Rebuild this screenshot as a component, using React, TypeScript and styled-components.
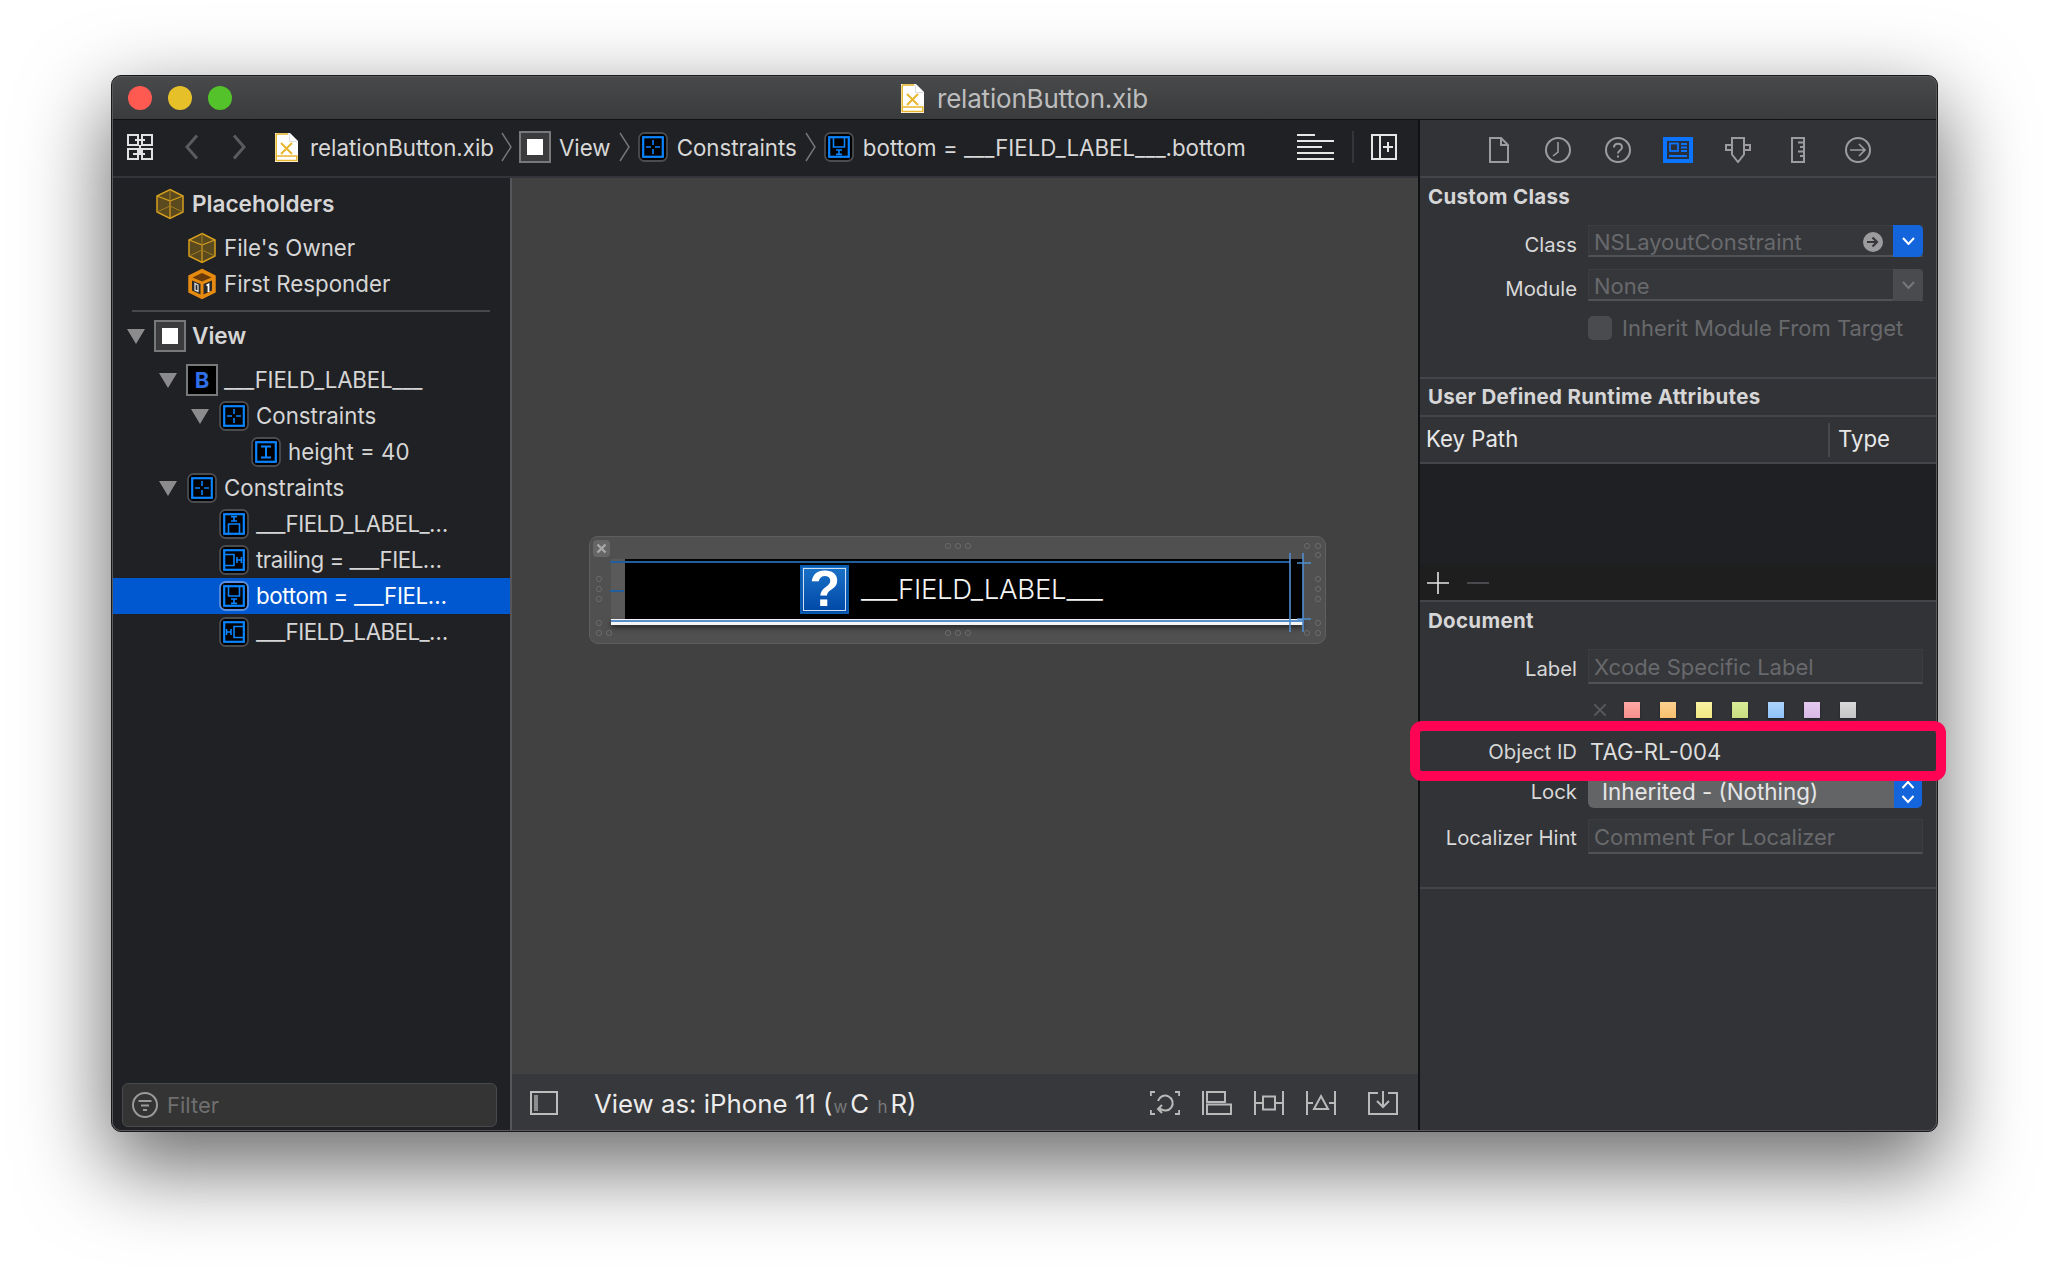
import React from 'react'
import styled, { createGlobalStyle } from 'styled-components'

const FONT = `Inter, "Liberation Sans", sans-serif`

const Global = createGlobalStyle`
  html, body { margin: 0; padding: 0; background: #fff; }
  body { font-family: ${FONT}; -webkit-font-smoothing: antialiased; }
  * { box-sizing: border-box; }
  svg { display: block; flex: none; }
`

const Page = styled.div`
  width: 2050px;
  height: 1280px;
  padding: 75px 0 0 111px;
  overflow: hidden;
  background: #fff;
`

const Window = styled.div`
  width: 1827px;
  height: 1057px;
  border: 1px solid #17181a;
  padding: 1px;
  border-radius: 10px;
  background: #5a5a5c;
  box-shadow: 0 32px 84px 4px rgba(0, 0, 0, 0.58);
  display: flex;
  flex-direction: column;
`

const TitleBar = styled.div`
  height: 43px;
  flex: none;
  display: flex;
  align-items: center;
  padding-left: 15px;
  border-bottom: 1px solid #111214;
  border-radius: 8px 8px 0 0;
  background: linear-gradient(#48494b, #3a3b3d);
`

const Light = styled.span<{ $color: string }>`
  width: 24px;
  height: 24px;
  border-radius: 50%;
  margin-right: 16px;
  background: ${p => p.$color};
`

const Title = styled.div`
  display: flex;
  align-items: center;
  gap: 13px;
  margin-left: 653px;
  color: #bdbdbe;
  font-size: 26px;
  letter-spacing: -0.2px;
`

const Body = styled.div`
  flex: 1;
  display: flex;
  min-height: 0;
`

const Main = styled.div`
  width: 1305px;
  flex: none;
  display: flex;
  flex-direction: column;
`

const Toolbar = styled.div`
  height: 58px;
  flex: none;
  display: flex;
  align-items: center;
  padding: 0 0 2px 14px;
  background: #202125;
  border-bottom: 2px solid #34353a;
  color: #d8d8d8;
  font-size: 22.3px;
`

const ToolIcon = styled.span<{ $ml: number }>`
  margin-left: ${p => p.$ml}px;
  flex: none;
`

const ToolRule = styled.span`
  width: 2px;
  height: 32px;
  margin: 0 17px 0 18px;
  background: #34353a;
`

const Crumb = styled.div<{ $ml?: number; $gap?: number }>`
  display: flex;
  align-items: center;
  gap: ${p => p.$gap ?? 8}px;
  margin-left: ${p => p.$ml ?? 0}px;
  white-space: nowrap;
`

const Workspace = styled.div`
  flex: 1;
  display: flex;
  min-height: 0;
`

const Navigator = styled.div`
  width: 399px;
  flex: none;
  display: flex;
  flex-direction: column;
  background: #202125;
  border-right: 2px solid #55565a;
  border-bottom-left-radius: 8px;
`

const Tree = styled.div`
  flex: 1;
  padding-top: 4px;
`

const Row = styled.div<{ $depth: number; $h?: number; $mt?: number; $selected?: boolean; $bold?: boolean }>`
  height: ${p => p.$h ?? 36}px;
  margin-top: ${p => p.$mt ?? 0}px;
  display: flex;
  align-items: center;
  padding-left: ${p => 14 + p.$depth * 32}px;
  font-size: ${p => (p.$bold ? 22.6 : 22.3)}px;
  font-weight: ${p => (p.$bold ? 600 : 400)};
  color: ${p => (p.$selected ? '#fff' : '#d6d6d6')};
  background: ${p => (p.$selected ? '#0058d0' : 'transparent')};
  white-space: nowrap;
`

const RowLabel = styled.span<{ $tight?: number }>`
  margin-top: -2px;
  letter-spacing: ${p => p.$tight ?? 0}px;
`

const Disclosure = styled.span<{ $open?: boolean }>`
  width: 27px;
  flex: none;
  &::before {
    content: '';
    display: ${p => (p.$open ? 'block' : 'none')};
    width: 0;
    height: 0;
    border-left: 9px solid transparent;
    border-right: 9px solid transparent;
    border-top: 15px solid #8b8b8d;
  }
`

const RowIcon = styled.span`
  width: 32px;
  height: 32px;
  flex: none;
  margin-right: 6px;
  display: block;
`

const TreeRule = styled.div`
  height: 2px;
  margin: 12px 20px 6px 19px;
  background: #47484b;
`

const Filter = styled.div`
  height: 44px;
  margin: 0 13px 3px 9px;
  display: flex;
  align-items: center;
  gap: 9px;
  padding-left: 9px;
  border-radius: 6px;
  border: 1px solid #48494b;
  background: #343434;
  color: #6f6f70;
  font-size: 22px;
`

const CanvasColumn = styled.div`
  flex: 1;
  display: flex;
  flex-direction: column;
  min-width: 0;
`

const CanvasArea = styled.div`
  flex: 1;
  padding: 358px 0 0 77px;
  background: #414141;
`

const Widget = styled.div`
  position: relative;
  width: 737px;
  height: 108px;
  padding: 22px 22px 0 21px;
  border-radius: 9px;
  border: 1px solid #5f5f5f;
  background: #505050;
`

const WidgetBody = styled.div`
  height: 60px;
  padding-left: 14px;
  background: #5a5a5a;
`

const WidgetBlack = styled.div`
  height: 100%;
  display: flex;
  align-items: center;
  padding-left: 175px;
  background: #000;
  color: #f4f4f4;
  font-size: 27.6px;
  font-weight: 300;
  letter-spacing: -0.3px;
`

const QuestionBadge = styled.div`
  width: 49px;
  height: 49px;
  margin-right: 12px;
  display: flex;
  align-items: center;
  justify-content: center;
  background: linear-gradient(#1a72c8, #0048a6);
  border: 2px solid #0a5bb0;
  outline: 1.5px solid #cfe0f2;
  outline-offset: -4px;
  color: #fff;
  font-family: "Liberation Sans", sans-serif;
  font-weight: 700;
  font-size: 50px;
`

const WidgetBase = styled.div`
  height: 6px;
  border-top: 1px solid #f4f4f4;
  border-bottom: 3px solid #f4f4f4;
  background: #5b8fcb;
  box-shadow: 0 3px 5px rgba(0, 0, 0, 0.5);
`

const WidgetMarks = styled.svg`
  position: absolute;
  left: -1px;
  top: -1px;
`

const BottomBar = styled.div`
  height: 56px;
  flex: none;
  display: flex;
  align-items: center;
  padding: 2px 20px 0 18px;
  background: #37383b;
  color: #ececec;
`

const ViewAs = styled.div`
  margin-left: 36px;
  font-size: 25.8px;
  flex: 1;
  white-space: nowrap;
`

const SizeClass = styled.span`
  font-size: 17px;
  color: #77787a;
  margin: 0 3px 0 1px;
`

const BottomIcons = styled.div`
  display: flex;
  align-items: center;
  gap: 22px;
`

const EmbedSlot = styled.span`
  margin-left: 10px;
`

const Inspector = styled.div`
  flex: 1;
  display: flex;
  flex-direction: column;
  border-left: 2px solid #101113;
  background: #323337;
  border-bottom-right-radius: 8px;
`

const InspectorTabs = styled.div`
  height: 58px;
  flex: none;
  padding: 4px 0 0 69px;
  display: flex;
  align-items: center;
  border-bottom: 2px solid #44454a;
`

const Tab = styled.span<{ $w: number; $ml: number }>`
  width: ${p => p.$w}px;
  margin-left: ${p => p.$ml}px;
  flex: none;
`

const Section = styled.div<{ $h: number }>`
  height: ${p => p.$h}px;
  flex: none;
  border-bottom: 2px solid #44454a;
`

const Heading = styled.div<{ $top: number }>`
  padding: ${p => p.$top}px 0 0 8px;
  height: ${p => p.$top + 24}px;
  line-height: 24px;
  font-size: 20.5px;
  font-weight: 700;
  letter-spacing: 0.3px;
  color: #d6d6d7;
`

const FormRow = styled.div<{ $top?: number }>`
  display: grid;
  grid-template-columns: 157px 335px;
  column-gap: 11px;
  margin-top: ${p => p.$top ?? 0}px;
  position: relative;
`

const FieldLabel = styled.div<{ $drop?: number }>`
  text-align: right;
  font-size: 20.3px;
  line-height: 24px;
  color: #d8d8d8;
  align-self: center;
  transform: translateY(${p => p.$drop ?? 0}px);
  white-space: nowrap;
`

const Field = styled.div<{ $h?: number }>`
  height: ${p => p.$h ?? 33}px;
  display: flex;
  align-items: center;
  padding: 2px 0 0 5px;
  border: 1px solid #3c3d41;
  border-bottom: 2px solid #515256;
  background: #36373b;
  color: #68696c;
  font-size: 22px;
  white-space: nowrap;
`

const ComboEnd = styled.span<{ $active?: boolean; $inset?: boolean; $flush?: boolean }>`
  margin-left: ${p => (p.$flush ? '0' : 'auto')};
  width: ${p => (p.$inset ? 28 : 30)}px;
  align-self: stretch;
  margin-top: ${p => (p.$inset ? 0 : -3)}px;
  margin-bottom: ${p => (p.$inset ? 0 : -2)}px;
  margin-right: ${p => (p.$inset ? 0 : -1)}px;
  display: flex;
  align-items: center;
  justify-content: center;
  border-radius: 0 5px 5px 0;
  background: ${p => (p.$active ? '#1465dc' : '#4a4b4e')};
`

const Checkline = styled.div`
  display: flex;
  align-items: center;
  gap: 10px;
  margin: 14px 0 0 168px;
  color: #68696c;
  font-size: 22px;
`

const CheckBox = styled.span`
  width: 24px;
  height: 24px;
  border-radius: 5px;
  background: #4a4b4e;
`

const TableHead = styled.div`
  height: 47px;
  flex: none;
  display: grid;
  grid-template-columns: 408px 1fr;
  align-items: center;
  border-bottom: 2px solid #44454a;
  font-size: 22.2px;
  color: #e8e8e8;
`

const ColHead = styled.div<{ $rule?: boolean }>`
  height: 34px;
  line-height: 32px;
  padding-left: ${p => (p.$rule ? 8 : 6)}px;
  border-left: ${p => (p.$rule ? '2px solid #47484c' : 'none')};
`

const TableBody = styled.div`
  height: 101px;
  flex: none;
  background: #1f2023;
`

const TableFoot = styled.div`
  height: 37px;
  flex: none;
  display: flex;
  align-items: center;
  gap: 18px;
  padding-left: 7px;
  background: #1e1e1e;
  border-bottom: 2px solid #44454a;
`

const Swatches = styled.div`
  display: flex;
  align-items: center;
  gap: 20px;
  height: 20px;
  margin: 16px 0 0 174px;
`

const Swatch = styled.span<{ $c: string }>`
  width: 16px;
  height: 16px;
  background: ${p => p.$c};
  box-shadow: 0 1px 2px rgba(0, 0, 0, 0.4);
`

const ClearMark = styled.svg`
  margin-right: -2px;
`

const ObjectValue = styled.div`
  padding-left: 2px;
  font-size: 22.2px;
  color: #dedede;
  height: 40px;
  line-height: 42px;
`

const Highlight = styled.div`
  position: absolute;
  left: -10px;
  top: -10px;
  bottom: -10px;
  width: 536px;
  border: 10px solid #ff0455;
  border-radius: 12px;
  z-index: 2;
  pointer-events: none;
`

const LockSelect = styled.div`
  height: 32px;
  margin-right: 1px;
  display: flex;
  align-items: center;
  padding-left: 14px;
  border-radius: 6px;
  background: #636466;
  color: #e6e6e6;
  font-size: 22.4px;
  white-space: nowrap;
`

const LockText = styled.span`
  margin-top: -2px;
`

const ClassArrowMark = styled.svg`
  margin-left: auto;
  margin-right: 10px;
`

// -- drawings --

const BLUE = '#0a84ff'

type ConstraintKind = 'group' | 'height' | 'top' | 'trailing' | 'bottom' | 'leading'

const ConstraintIcon = ({ kind, selected }: { kind: ConstraintKind; selected?: boolean }) => (
  <svg width="32" height="32" viewBox="0 0 32 32" fill="none">
    <rect x="2" y="2" width="28" height="28" rx="5.5" fill="#000" stroke={selected ? '#5c8fe0' : '#4b4c4f'} strokeWidth="1.8" />
    <rect x="6.2" y="6.2" width="19.6" height="19.6" stroke={BLUE} strokeWidth="2.2" />
    <g stroke={BLUE} strokeWidth="1.6">
      {kind === 'group' && (
        <path d="M9 16H14M18 16H23M16 9V14M16 18V23" />
      )}
      {kind === 'height' && <path d="M11 10.5H21M11 21.5H21M16 10.5V21.5" strokeWidth="2" />}
      {kind === 'top' && <path d="M13 8.6H19M13 13H19M16 8.6V13M10.5 25V16H21.5V25" />}
      {kind === 'bottom' && <path d="M10.5 7V16H21.5V7M13 19H19M13 23.4H19M16 19V23.4" />}
      {kind === 'trailing' && <path d="M7 10.5H16V21.5H7M19 13V19M23.4 13V19M19 16H23.4" />}
      {kind === 'leading' && <path d="M25 10.5H16V21.5H25M13 13V19M8.6 13V19M8.6 16H13" />}
    </g>
  </svg>
)

const ViewIcon = () => (
  <svg width="32" height="32" viewBox="0 0 32 32">
    <rect x="1" y="1" width="30" height="30" fill="#3b3b3d" stroke="#77787a" strokeWidth="2" />
    <rect x="8" y="8" width="16" height="16" fill="#fff" />
  </svg>
)

const ButtonIcon = () => (
  <svg width="32" height="32" viewBox="0 0 32 32">
    <rect x="1" y="1" width="30" height="30" fill="#000" stroke="#77787a" strokeWidth="2" />
    <text x="16" y="24" textAnchor="middle" fontSize="22" fontWeight="700" fill="#2f6fe8" fontFamily={FONT}>B</text>
  </svg>
)

const CubeIcon = () => (
  <svg width="32" height="32" viewBox="0 0 32 32" fill="none">
    <path d="M16 1.5L29 8V24L16 30.5L3 24V8Z" fill="#5b4a1d" stroke="#d69f1e" strokeWidth="1.5" />
    <path d="M3 8L16 13V30.5M29 8L16 13" stroke="#d69f1e" strokeWidth="1.2" />
    <path d="M16 1.5V18M3 24L16 18L29 24" stroke="#a07c22" strokeWidth="1" />
  </svg>
)

const ResponderIcon = () => (
  <svg width="32" height="32" viewBox="0 0 32 32" fill="none">
    <path d="M16 1.5L29 8V24L16 30.5L3 24V8Z" fill="#e68a10" stroke="#e68a10" strokeWidth="1.5" />
    <path d="M16 5L25.5 9.5L16 13.5L6.5 9.5Z" fill="#6a3a08" />
    <path d="M6 12.5L14.5 16V26.5L6 22.5Z" fill="#2a2a2a" />
    <path d="M17.5 16L26 12.5V22.5L17.5 26.5Z" fill="#2a2a2a" />
    <path d="M9 15.5V22L12 23.3V17Z" stroke="#e9e9e9" strokeWidth="1.2" />
    <path d="M20.5 17.5L22.5 16.5V24" stroke="#fff" strokeWidth="1.8" />
  </svg>
)

const XibIcon = () => (
  <svg width="23" height="29" viewBox="0 0 23 29" fill="none">
    <path d="M0 0H15L23 8V29H0Z" fill="#fff" />
    <path d="M1 1H14.5V8.5H22" stroke="#dedede" strokeWidth="1" />
    <path d="M1.2 1V27.5H21.8V23H1.2M1.2 1H13" stroke="#e8b62c" strokeWidth="1.5" />
    <path d="M6 10L17 21M17 10L6 21" stroke="#e8b62c" strokeWidth="2" />
  </svg>
)

const GridIcon = () => (
  <svg width="26" height="26" viewBox="0 0 26 26" fill="none" stroke="#e2e2e2" strokeWidth="2">
    <rect x="1" y="1" width="10" height="10" />
    <rect x="15" y="1" width="10" height="10" />
    <rect x="1" y="15" width="10" height="10" />
    <rect x="15" y="15" width="10" height="10" />
    <path d="M8 6H18M13 11V19M6 20H18" />
  </svg>
)

const Chevron = ({ left }: { left?: boolean }) => (
  <svg width="14" height="26" viewBox="0 0 14 26" fill="none" stroke="#5a5b5e" strokeWidth="3">
    <path d={left ? 'M12 1.5L2 13L12 24.5' : 'M2 1.5L12 13L2 24.5'} />
  </svg>
)

const CrumbSep = () => (
  <svg width="11" height="30" viewBox="0 0 11 30" fill="none" stroke="#77787a" strokeWidth="1.4">
    <path d="M1 1L10 15L1 29" />
  </svg>
)

const LinesIcon = () => (
  <svg width="37" height="26" viewBox="0 0 37 26" stroke="#e6e6e6" strokeWidth="2">
    <path d="M0 1H18M0 7H37M0 13H25M0 19H37M0 25H37" />
  </svg>
)

const AddPanelIcon = () => (
  <svg width="26" height="26" viewBox="0 0 26 26" fill="none" stroke="#e6e6e6" strokeWidth="2">
    <rect x="1" y="1" width="24" height="24" />
    <path d="M9 1V25M17 8V18M12 13H22" />
  </svg>
)

const FileTab = () => (
  <svg width="20" height="26" viewBox="0 0 20 26" fill="none" stroke="#9c9c9e" strokeWidth="2">
    <path d="M1 1H12L19 8V25H1ZM12 1V8H19" />
  </svg>
)
const ClockTab = () => (
  <svg width="26" height="26" viewBox="0 0 26 26" fill="none" stroke="#9c9c9e" strokeWidth="2">
    <circle cx="13" cy="13" r="12" />
    <path d="M13 5V15L8 19" strokeWidth="1.6" />
  </svg>
)
const HelpTab = () => (
  <svg width="26" height="26" viewBox="0 0 26 26" fill="none" stroke="#9c9c9e" strokeWidth="2">
    <circle cx="13" cy="13" r="12" />
    <path d="M9 10.5C9 5.5 17 5.5 17 10.5C17 13.5 13 13 13 16.5M13 18.5V20.5" />
  </svg>
)
const IdentityTab = () => (
  <svg width="30" height="26" viewBox="0 0 30 26" fill="none">
    <rect x="2" y="2" width="26" height="22" fill="#2a2f3c" stroke="#0a74ff" strokeWidth="4" />
    <rect x="7" y="6.5" width="8" height="7.5" stroke="#0a74ff" strokeWidth="1.8" />
    <path d="M18 7H24M18 10.5H24M18 14H24M6 19H24" stroke="#0a74ff" strokeWidth="1.8" />
  </svg>
)
const PinTab = () => (
  <svg width="26" height="26" viewBox="0 0 26 26" fill="none" stroke="#9c9c9e" strokeWidth="2">
    <path d="M7 1H19V17.5L13 25L7 17.5ZM7 8H1V13H7M19 8H25V13H19" />
  </svg>
)
const RulerTab = () => (
  <svg width="14" height="26" viewBox="0 0 14 26" fill="none" stroke="#9c9c9e" strokeWidth="2">
    <rect x="1" y="1" width="12" height="24" />
    <path d="M7 5.5H13M9 10H13M7 14.5H13M9 19H13" />
  </svg>
)
const ArrowTab = () => (
  <svg width="26" height="26" viewBox="0 0 26 26" fill="none" stroke="#9c9c9e" strokeWidth="2">
    <circle cx="13" cy="13" r="12" />
    <path d="M5 13H20M14 7L20 13L14 19" strokeWidth="1.7" />
  </svg>
)

const Caret = ({ dim }: { dim?: boolean }) => (
  <svg width="13" height="8" viewBox="0 0 13 8" fill="none" stroke={dim ? '#77787b' : '#fff'} strokeWidth="2">
    <path d="M1 1L6.5 7L12 1" />
  </svg>
)

const UpDown = () => (
  <svg width="14" height="24" viewBox="0 0 14 24" fill="none" stroke="#fff" strokeWidth="2">
    <path d="M1.5 8L7 2L12.5 8M1.5 16L7 22L12.5 16" />
  </svg>
)

const ClassArrow = () => (
  <ClassArrowMark width="20" height="20" viewBox="0 0 20 20">
    <circle cx="10" cy="10" r="10" fill="#9c9c9e" />
    <path d="M4 10H13.5M9.5 5.5L14 10L9.5 14.5" fill="none" stroke="#36373b" strokeWidth="2.2" />
  </ClassArrowMark>
)

const FilterIcon = () => (
  <svg width="26" height="26" viewBox="0 0 26 26" fill="none" stroke="#9a9a9b" strokeWidth="2">
    <circle cx="13" cy="13" r="12" />
    <path d="M6.5 9H19.5M9 13.5H17M11 18H15" />
  </svg>
)

const PanelIcon = () => (
  <svg width="28" height="24" viewBox="0 0 28 24" fill="none">
    <rect x="1" y="1" width="26" height="22" stroke="#bdbdbe" strokeWidth="2" />
    <rect x="4" y="4" width="4" height="16" fill="#8d8d8f" />
  </svg>
)

const grey = '#b9b9ba'

const UpdateFramesIcon = () => (
  <svg width="30" height="24" viewBox="0 0 30 24" fill="none" stroke={grey} strokeWidth="2">
    <path d="M5 1H0.8V5M25 1H29.2V5M5 23H0.8V19M25 23H29.2V19" />
    <path d="M10 18.5A7.5 7.5 0 1 0 8 11M12 15L8 19L12 23" transform="translate(0 -1)" />
  </svg>
)
const AlignIcon = () => (
  <svg width="30" height="24" viewBox="0 0 30 24" fill="none" stroke={grey} strokeWidth="2">
    <path d="M1 0V24" />
    <rect x="5" y="1" width="18" height="10" />
    <rect x="5" y="13.5" width="24" height="9.5" />
  </svg>
)
const PinHIcon = () => (
  <svg width="30" height="24" viewBox="0 0 30 24" fill="none" stroke={grey} strokeWidth="2">
    <path d="M1 0V24M29 0V24M1 12H8M22 12H29" />
    <rect x="9" y="5.5" width="12" height="13" />
  </svg>
)
const PinTIcon = () => (
  <svg width="30" height="24" viewBox="0 0 30 24" fill="none" stroke={grey} strokeWidth="2">
    <path d="M1 0V24M29 0V24M1 12H7M23 12H29" />
    <path d="M15 5L22 18H8Z" />
  </svg>
)
const EmbedIcon = () => (
  <svg width="30" height="24" viewBox="0 0 30 24" fill="none" stroke={grey} strokeWidth="2">
    <path d="M10 2H1V23H29V2H20" />
    <path d="M15 0V15M9 10L15 16L21 10" />
  </svg>
)

const Dot = ({ x, y }: { x: number; y: number }) => (
  <circle cx={x} cy={y} r="2.6" fill="none" stroke="#6a6a6a" strokeWidth="1" />
)

const dotSpots: [number, number][] = [
  [359, 10], [369, 10], [379, 10], [359, 97], [369, 97], [379, 97],
  [10, 43], [10, 53], [10, 63], [729, 43], [729, 53], [729, 63],
  [718, 10], [729, 10], [729, 19], [10, 97], [20, 97], [10, 87],
  [718, 97], [729, 97], [729, 87],
]

const Marks = () => (
  <WidgetMarks width="737" height="108" viewBox="0 0 737 108" fill="none">
    <rect x="4" y="4" width="17" height="17" rx="4" fill="#666" />
    <path d="M8.5 8.5L16.5 16.5M16.5 8.5L8.5 16.5" stroke="#a8a8a8" strokeWidth="2.4" />
    {dotSpots.map(([x, y]) => <Dot key={`${x}-${y}`} x={x} y={y} />)}
    <path d="M21 26H701M21 55H35" stroke="#225e9e" strokeWidth="2" />
    <path d="M701 17V96M714 17V96M708 27H722M708 83H722" stroke="#4f8ed0" strokeWidth="1.6" />
  </WidgetMarks>
)

const App = () => (
  <Page>
    <Global />
    <Window>
      <TitleBar>
        <Light $color="#ff5a52" />
        <Light $color="#e6c029" />
        <Light $color="#53c22b" />
        <Title>
          <XibIcon />
          relationButton.xib
        </Title>
      </TitleBar>
      <Body>
        <Main>
          <Toolbar>
            <GridIcon />
            <ToolIcon $ml={32}><Chevron left /></ToolIcon>
            <ToolIcon $ml={33}><Chevron /></ToolIcon>
            <Crumb $ml={29} $gap={12}>
              <XibIcon />
              relationButton.xib
            </Crumb>
            <Crumb $ml={7}><CrumbSep /></Crumb>
            <Crumb $ml={7}><ViewIcon />View</Crumb>
            <Crumb $ml={8}><CrumbSep /></Crumb>
            <Crumb $ml={7}><ConstraintIcon kind="group" />Constraints</Crumb>
            <Crumb $ml={8}><CrumbSep /></Crumb>
            <Crumb $ml={7}><ConstraintIcon kind="bottom" />bottom = ___FIELD_LABEL___.bottom</Crumb>
            <ToolIcon $ml={51}><LinesIcon /></ToolIcon>
            <ToolRule />
            <AddPanelIcon />
          </Toolbar>
          <Workspace>
            <Navigator>
              <Tree>
                <Row $depth={0} $h={44} $bold><Disclosure /><RowIcon><CubeIcon /></RowIcon><RowLabel>Placeholders</RowLabel></Row>
                <Row $depth={1} $h={44}><Disclosure /><RowIcon><CubeIcon /></RowIcon><RowLabel>File's Owner</RowLabel></Row>
                <Row $depth={1} $h={28}><Disclosure /><RowIcon><ResponderIcon /></RowIcon><RowLabel>First Responder</RowLabel></Row>
                <TreeRule />
                <Row $depth={0} $bold><Disclosure $open /><RowIcon><ViewIcon /></RowIcon><RowLabel>View</RowLabel></Row>
                <Row $depth={1} $mt={8}><Disclosure $open /><RowIcon><ButtonIcon /></RowIcon><RowLabel $tight={-0.2}>___FIELD_LABEL___</RowLabel></Row>
                <Row $depth={2}><Disclosure $open /><RowIcon><ConstraintIcon kind="group" /></RowIcon><RowLabel>Constraints</RowLabel></Row>
                <Row $depth={3}><Disclosure /><RowIcon><ConstraintIcon kind="height" /></RowIcon><RowLabel>height = 40</RowLabel></Row>
                <Row $depth={1}><Disclosure $open /><RowIcon><ConstraintIcon kind="group" /></RowIcon><RowLabel>Constraints</RowLabel></Row>
                <Row $depth={2}><Disclosure /><RowIcon><ConstraintIcon kind="top" /></RowIcon><RowLabel $tight={-0.55}>___FIELD_LABEL_…</RowLabel></Row>
                <Row $depth={2}><Disclosure /><RowIcon><ConstraintIcon kind="trailing" /></RowIcon><RowLabel $tight={-0.45}>trailing = ___FIEL…</RowLabel></Row>
                <Row $depth={2} $selected><Disclosure /><RowIcon><ConstraintIcon kind="bottom" selected /></RowIcon><RowLabel $tight={-0.35}>bottom = ___FIEL…</RowLabel></Row>
                <Row $depth={2}><Disclosure /><RowIcon><ConstraintIcon kind="leading" /></RowIcon><RowLabel $tight={-0.55}>___FIELD_LABEL_…</RowLabel></Row>
              </Tree>
              <Filter><FilterIcon />Filter</Filter>
            </Navigator>
            <CanvasColumn>
              <CanvasArea>
                <Widget>
                  <WidgetBody>
                    <WidgetBlack>
                      <QuestionBadge>?</QuestionBadge>
                      ___FIELD_LABEL___
                    </WidgetBlack>
                  </WidgetBody>
                  <WidgetBase />
                  <Marks />
                </Widget>
              </CanvasArea>
              <BottomBar>
                <PanelIcon />
                <ViewAs>
                  View as: iPhone 11 (<SizeClass>w</SizeClass>C <SizeClass>h</SizeClass>R)
                </ViewAs>
                <BottomIcons>
                  <UpdateFramesIcon />
                  <AlignIcon />
                  <PinHIcon />
                  <PinTIcon />
                  <EmbedSlot><EmbedIcon /></EmbedSlot>
                </BottomIcons>
              </BottomBar>
            </CanvasColumn>
          </Workspace>
        </Main>
        <Inspector>
          <InspectorTabs>
            <Tab $w={20} $ml={0}><FileTab /></Tab>
            <Tab $w={26} $ml={36}><ClockTab /></Tab>
            <Tab $w={26} $ml={34}><HelpTab /></Tab>
            <Tab $w={30} $ml={32}><IdentityTab /></Tab>
            <Tab $w={26} $ml={32}><PinTab /></Tab>
            <Tab $w={14} $ml={40}><RulerTab /></Tab>
            <Tab $w={26} $ml={40}><ArrowTab /></Tab>
          </InspectorTabs>
          <Section $h={201}>
            <Heading $top={7}>Custom Class</Heading>
            <FormRow $top={16}>
              <FieldLabel $drop={4}>Class</FieldLabel>
              <Field $h={32}>
                NSLayoutConstraint
                <ClassArrow />
                <ComboEnd $active $flush><Caret /></ComboEnd>
              </Field>
            </FormRow>
            <FormRow $top={12}>
              <FieldLabel $drop={4}>Module</FieldLabel>
              <Field $h={32}>
                None
                <ComboEnd><Caret dim /></ComboEnd>
              </Field>
            </FormRow>
            <Checkline><CheckBox />Inherit Module From Target</Checkline>
          </Section>
          <Section $h={38}>
            <Heading $top={6}>User Defined Runtime Attributes</Heading>
          </Section>
          <TableHead>
            <ColHead>Key Path</ColHead>
            <ColHead $rule>Type</ColHead>
          </TableHead>
          <TableBody />
          <TableFoot>
            <svg width="22" height="22" viewBox="0 0 22 22" stroke="#e4e4e4" strokeWidth="1.6"><path d="M0 11H22M11 0V22" /></svg>
            <svg width="22" height="22" viewBox="0 0 22 22" stroke="#55565a" strokeWidth="1.6"><path d="M0 11H22" /></svg>
          </TableFoot>
          <Section $h={287}>
            <Heading $top={7}>Document</Heading>
            <FormRow $top={16}>
              <FieldLabel $drop={2}>Label</FieldLabel>
              <Field $h={35}>Xcode Specific Label</Field>
            </FormRow>
            <Swatches>
              <ClearMark width="12" height="12" viewBox="0 0 12 12" stroke="#55565a" strokeWidth="2">
                <path d="M0 0L12 12M12 0L0 12" />
              </ClearMark>
              <Swatch $c="linear-gradient(#ffa8a6,#f58f8b)" />
              <Swatch $c="linear-gradient(#fcd08e,#f7bf6e)" />
              <Swatch $c="linear-gradient(#faf2a0,#f2e884)" />
              <Swatch $c="linear-gradient(#d8ea98,#c9df80)" />
              <Swatch $c="linear-gradient(#add5ff,#8fc2fa)" />
              <Swatch $c="linear-gradient(#e4c8ee,#d8b8e6)" />
              <Swatch $c="linear-gradient(#d8d8d8,#c4c4c4)" />
            </Swatches>
            <FormRow $top={11}>
              <FieldLabel $drop={1}>Object ID</FieldLabel>
              <ObjectValue>TAG-RL-004</ObjectValue>
              <Highlight />
            </FormRow>
            <FormRow $top={5}>
              <FieldLabel>Lock</FieldLabel>
              <LockSelect>
                <LockText>Inherited - (Nothing)</LockText>
                <ComboEnd $active $inset><UpDown /></ComboEnd>
              </LockSelect>
            </FormRow>
            <FormRow $top={11}>
              <FieldLabel $drop={1}>Localizer Hint</FieldLabel>
              <Field $h={35}>Comment For Localizer</Field>
            </FormRow>
          </Section>
        </Inspector>
      </Body>
    </Window>
  </Page>
)

export default App
